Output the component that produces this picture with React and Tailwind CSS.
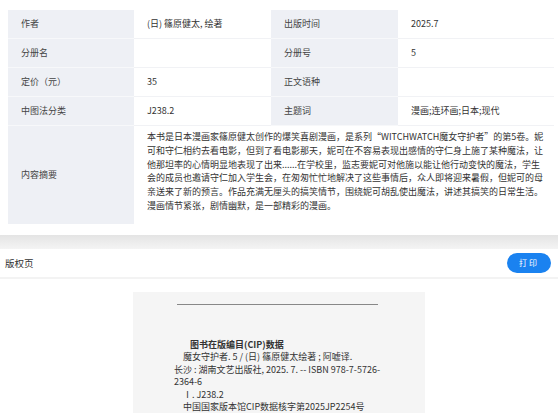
import React from "react";

const FONT = { fontFamily: '"Noto Sans CJK SC", "Noto Sans", sans-serif' };

function Label({ children, className = "" }) {
  return (
    <div className={"bg-[#eef0f5] border-b border-[#f7f8fa] pl-[13px] flex items-center text-[#444] " + className}>
      {children}
    </div>
  );
}

function Value({ children, className = "" }) {
  return (
    <div className={"border-b border-[#f1f2f5] pl-[13px] flex items-center text-[#333] " + className}>
      {children}
    </div>
  );
}

const summary = [
  "本书是日本漫画家篠原健太创作的爆笑喜剧漫画，是系列“WITCHWATCH魔女守护者”的第5卷。妮",
  "可和守仁相约去看电影，但到了看电影那天，妮可在不容易表现出感情的守仁身上施了某种魔法，让",
  "他那坦率的心情明显地表现了出来......在学校里，监志要妮可对他施以能让他行动变快的魔法，学生",
  "会的成员也邀请守仁加入学生会，在匆匆忙忙地解决了这些事情后，众人即将迎来暑假，但妮可的母",
  "亲送来了新的预言。作品充满无厘头的搞笑情节，围绕妮可胡乱使出魔法，讲述其搞笑的日常生活。",
  "漫画情节紧张，剧情幽默，是一部精彩的漫画。",
];

export default function App() {
  return (
    <div className="w-[558px] h-[413px] overflow-hidden bg-white text-[9px]" style={FONT}>
      <div className="bg-white pt-[10px] pl-[8px] pr-[4px] pb-[11px]">
        <div className="grid grid-cols-[126px_137px_127px_1fr]">
          <Label className="h-[29px]">作者</Label>
          <Value className="h-[29px]">(日) 篠原健太, 绘著</Value>
          <Label className="h-[29px]">出版时间</Label>
          <Value className="h-[29px]">2025.7</Value>

          <Label className="h-[29px]">分册名</Label>
          <Value className="h-[29px]"></Value>
          <Label className="h-[29px]">分册号</Label>
          <Value className="h-[29px]">5</Value>

          <Label className="h-[29px]">定价（元）</Label>
          <Value className="h-[29px]">35</Value>
          <Label className="h-[29px]">正文语种</Label>
          <Value className="h-[29px]"></Value>

          <Label className="h-[29px]">中图法分类</Label>
          <Value className="h-[29px]">J238.2</Value>
          <Label className="h-[29px]">主题词</Label>
          <Value className="h-[29px]">漫画;连环画;日本;现代</Value>

          <Label className="h-[98px] border-b-0">内容摘要</Label>
          <div className="col-span-3 pl-[13px] pt-[4px] text-[#333] leading-[13.8px]">
            {summary.map((l, i) => (
              <div key={i} className="whitespace-nowrap">{l}</div>
            ))}
          </div>
        </div>
      </div>
      <div className="h-[14px] bg-gradient-to-b from-[#e4e4e4] to-[#f4f4f4]"></div>
      <div className="h-[30px] flex items-center justify-between pl-[5px] pr-[7px] border-b-2 border-[#f3f3f3]">
        <span className="text-[9.5px] text-[#333]">版权页</span>
        <button className="w-[44px] h-[20px] rounded-full bg-[#1a82f0] text-white text-[8px] tracking-[2px] flex items-center justify-center">
          打印
        </button>
      </div>
      <div className="flex justify-center pt-[13px]">
        <div className="w-[292px] h-[200px] bg-[#f5f5f5] pt-[12px]">
          <div className="ml-[44px] w-[201px] h-px bg-[#888]"></div>
          <div className="pt-[34px] pl-[41px] text-[#333] leading-[12.4px] text-[9px]">
            <div className="pl-[16px] font-bold">图书在版编目(CIP)数据</div>
            <div className="pl-[9px]">魔女守护者. 5 / (日) 篠原健太绘著 ; 阿嘘译.</div>
            <div>长沙 : 湖南文艺出版社, 2025. 7. -- ISBN 978-7-5726-</div>
            <div>2364-6</div>
            <div className="pl-[9px]">Ⅰ. J238.2</div>
            <div className="pl-[9px]">中国国家版本馆CIP数据核字第2025JP2254号</div>
          </div>
        </div>
      </div>
    </div>
  );
}
